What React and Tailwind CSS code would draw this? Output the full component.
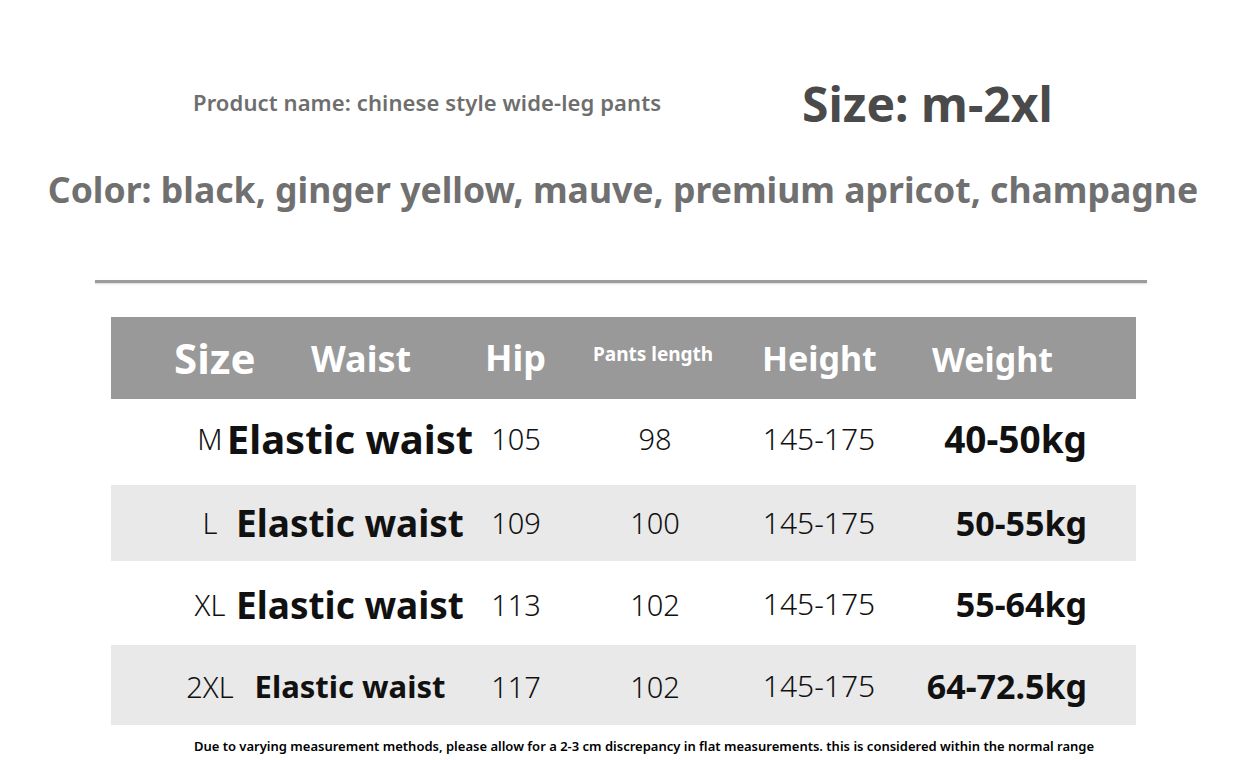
import React from "react";

const rows = [
  { size: "M", waist: "Elastic waist", hip: "105", len: "98", height: "145-175", weight: "40-50kg", bg: "bg-white", h: "h-[86px] pb-[6px]", waistCls: "text-[40px]", weightCls: "text-[37px]" },
  { size: "L", waist: "Elastic waist", hip: "109", len: "100", height: "145-175", weight: "50-55kg", bg: "bg-[#e9e9e9]", h: "h-[76px]", waistCls: "text-[37px]", weightCls: "text-[34px]" },
  { size: "XL", waist: "Elastic waist", hip: "113", len: "102", height: "145-175", weight: "55-64kg", bg: "bg-white", h: "h-[84px] pt-[3px]", waistCls: "text-[37px]", weightCls: "text-[34px]" },
  { size: "2XL", waist: "Elastic waist", hip: "117", len: "102", height: "145-175", weight: "64-72.5kg", bg: "bg-[#e9e9e9]", h: "h-[80px] pt-[3px]", waistCls: "text-[31px]", weightCls: "text-[34px]" },
];

export default function App() {
  return (
    <div className="w-[1246px] h-[760px] bg-white overflow-hidden text-[#111]" style={{ fontFamily: '"Noto Sans", "Open Sans", sans-serif' }}>
      <div className="flex items-center h-[60px] mt-[72px]">
        <div className="ml-[193px] w-[609px] text-[22px] tracking-[0.1px] font-semibold text-[#6e6e6e] leading-none">Product name: chinese style wide-leg pants</div>
        <div className="text-[48px] font-bold text-[#4a4a4a] leading-none pt-[3px]">Size: m-2xl</div>
      </div>
      <div className="mt-[40px] text-center text-[35.6px] font-bold text-[#707070] leading-none">
        Color: black, ginger yellow, mauve, premium apricot, champagne
      </div>
      <div className="ml-[95px] w-[1052px] h-[3px] mt-[72px] bg-[#9c9c9c] shadow-[0_1px_2px_rgba(0,0,0,0.15)]" />
      <div className="ml-[111px] w-[1025px] mt-[34px]">
        <div className="flex items-center h-[82px] bg-[#999999] text-white font-bold leading-none">
          <div className="ml-[63px] w-[137px] text-[42px]">Size</div>
          <div className="w-[174px] text-[36px] pt-[2px]">Waist</div>
          <div className="w-[108px] text-[36px]">Hip</div>
          <div className="w-[169px] text-[19px] -mt-[6px]">Pants length</div>
          <div className="w-[170px] text-[34px]">Height</div>
          <div className="text-[34px] pt-[2px]">Weight</div>
        </div>
        {rows.map((r) => (
          <div key={r.size} className={`flex items-center ${r.h} ${r.bg} leading-none`}>
            <div className="ml-[39px] w-[120px] flex justify-center text-[29px] font-light">{r.size}</div>
            <div className={`w-[160px] flex justify-center whitespace-nowrap font-bold ${r.waistCls}`}>{r.waist}</div>
            <div className="ml-[26px] w-[120px] flex justify-center text-[29px] font-light">{r.hip}</div>
            <div className="ml-[19px] w-[120px] flex justify-center text-[29px] font-light">{r.len}</div>
            <div className="ml-[34px] w-[140px] flex justify-center text-[30px] font-light">{r.height}</div>
            <div className={`ml-[11px] w-[187px] flex justify-end font-bold ${r.weightCls}`}>{r.weight}</div>
          </div>
        ))}
      </div>
      <div className="mt-[15px] pl-[42px] text-[13px] font-semibold text-black text-center leading-none">
        Due to varying measurement methods, please allow for a 2-3 cm discrepancy in flat measurements. this is considered within the normal range
      </div>
    </div>
  );
}
